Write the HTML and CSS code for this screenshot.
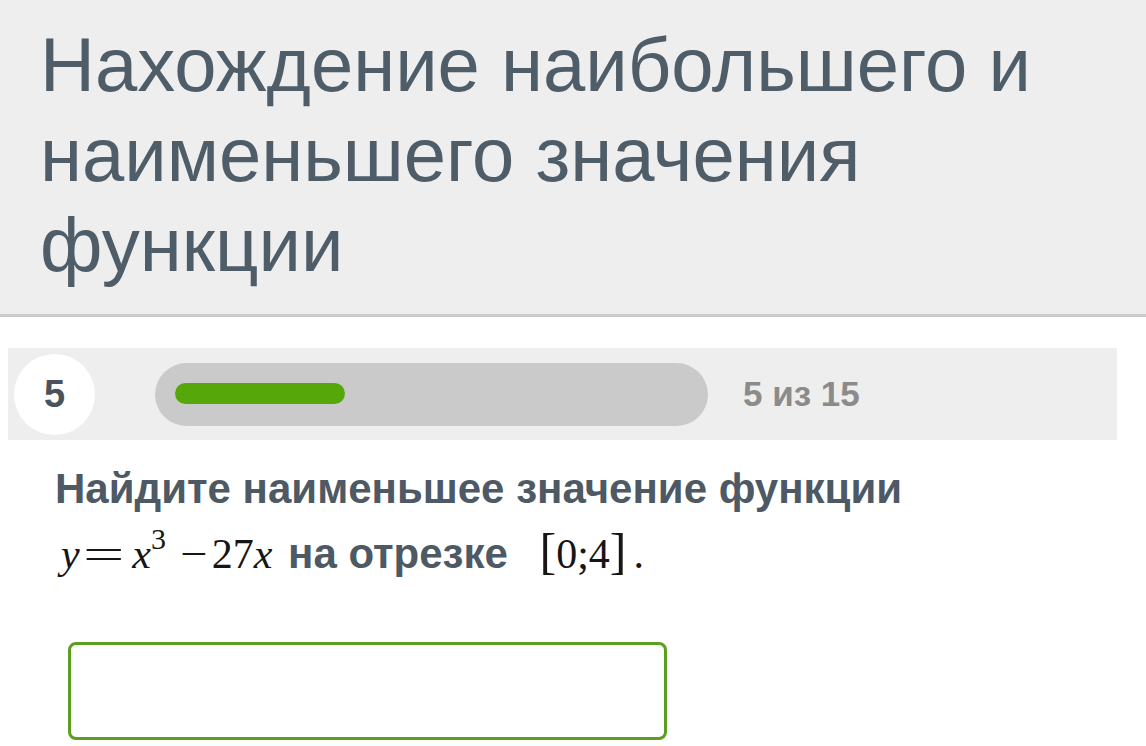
FILE: index.html
```html
<!DOCTYPE html>
<html lang="ru">
<head>
<meta charset="utf-8">
<link rel="stylesheet" href="styles.css">
</head>
<body>
<header class="head">
  <h1 class="title">Нахождение наибольшего и наименьшего значения функции</h1>
</header>
<section class="progress">
  <div class="num">5</div>
  <div class="track"><div class="fill" style="width:170px"></div></div>
  <div class="count">5 из 15</div>
</section>
<section class="task">
  <p class="q">Найдите наименьшее значение функции<br><span class="m f"><i class="y">y</i><span class="eq">=</span><i>x</i><sup>3</sup><span class="minus">−</span>27<i>x</i></span> на отрезке <span class="m iv"><span class="br">[</span>0;4<span class="br">]</span></span><span class="m dot">.</span></p>
  <div class="answer"></div>
</section>
</body>
</html>
```
FILE: styles.css
```css
* { box-sizing: border-box; }
body {
  margin: 0;
  background: #fff;
  font-family: "Liberation Sans", Arial, sans-serif;
}
.head {
  background: #eeeeee;
  border-bottom: 3px solid #cbcbcb;
  padding: 20px 40px 24px 40px;
}
.title {
  margin: 0;
  font-weight: normal;
  font-size: 76px;
  line-height: 90px;
  color: #4f5d68;
  width: 1060px;
}
.progress {
  margin: 31px 0 0 8px;
  width: 1109px;
  height: 92px;
  background: #eeeeee;
  display: flex;
  align-items: center;
}
.num {
  width: 81px;
  height: 81px;
  margin-left: 6px;
  border-radius: 50%;
  background: #fff;
  display: flex;
  align-items: center;
  justify-content: center;
  font-weight: bold;
  font-size: 38px;
  color: #4a535b;
}
.track {
  margin-left: 60px;
  width: 553px;
  height: 63px;
  border-radius: 32px;
  background: #cacaca;
  padding: 20px;
}
.fill {
  height: 21px;
  border-radius: 11px;
  background: #56a70a;
}
.count {
  margin-left: 35px;
  font-weight: bold;
  font-size: 35px;
  color: #8b8b8b;
}
.task {
  padding-left: 55px;
}
.q {
  margin: 17px 0 0 0;
  font-weight: bold;
  font-size: 42px;
  line-height: 63px;
  color: #4d5964;
}
.m {
  font-family: "Liberation Serif", "Times New Roman", serif;
  font-weight: normal;
  color: #161616;
  font-size: 42px;
}
.m i { font-style: italic; }
.f { margin-right: 4px; }
.y { margin-left: 6px; }
.eq {
  display: inline-block;
  transform: scaleX(1.75);
  margin: 0 17px 0 12px;
}
.minus {
  display: inline-block;
  transform: scaleX(1.15);
  margin: 0 6px 0 16px;
}
.m sup { font-size: 30px; vertical-align: 19px; line-height: 0; }
.iv { margin-left: 20px; }
.br { font-size: 50px; }
.dot { margin-left: 7px; }
.answer {
  margin: 56px 0 0 13px;
  width: 599px;
  height: 98px;
  border: 3px solid #5c9e1f;
  border-radius: 8px;
  background: #fff;
}
```
